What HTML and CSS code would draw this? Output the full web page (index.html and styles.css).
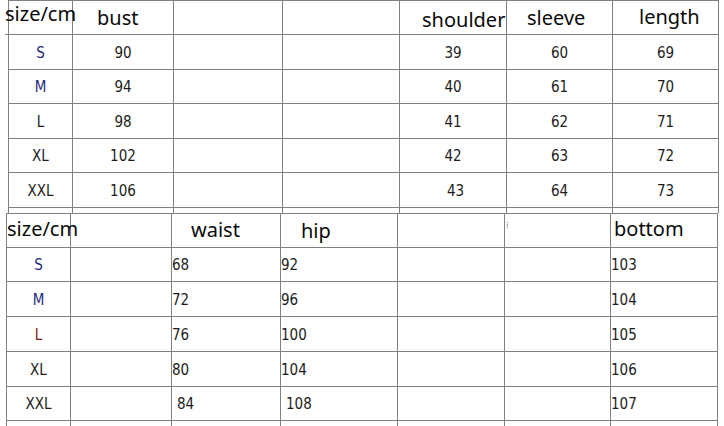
FILE: index.html
```html
<!DOCTYPE html>
<html>
<head>
<meta charset="utf-8">
<link rel="stylesheet" href="styles.css">
</head>
<body>
<div class="clip-top">
  <div class="grid grid-top">
    <div class="cell head h-size1">size/cm</div>
    <div class="cell head h-bust">bust</div>
    <div class="cell"></div>
    <div class="cell"></div>
    <div class="cell head h-shoulder">shoulder</div>
    <div class="cell head h-sleeve">sleeve</div>
    <div class="cell head h-length">length</div>

    <div class="cell data sz navy">S</div>
    <div class="cell data">90</div>
    <div class="cell"></div>
    <div class="cell"></div>
    <div class="cell data">39</div>
    <div class="cell data">60</div>
    <div class="cell data">69</div>

    <div class="cell data sz navy">M</div>
    <div class="cell data">94</div>
    <div class="cell"></div>
    <div class="cell"></div>
    <div class="cell data">40</div>
    <div class="cell data">61</div>
    <div class="cell data">70</div>

    <div class="cell data sz">L</div>
    <div class="cell data">98</div>
    <div class="cell"></div>
    <div class="cell"></div>
    <div class="cell data">41</div>
    <div class="cell data">62</div>
    <div class="cell data">71</div>

    <div class="cell data sz">XL</div>
    <div class="cell data">102</div>
    <div class="cell"></div>
    <div class="cell"></div>
    <div class="cell data">42</div>
    <div class="cell data">63</div>
    <div class="cell data">72</div>

    <div class="cell data sz">XXL</div>
    <div class="cell data">106</div>
    <div class="cell"></div>
    <div class="cell"></div>
    <div class="cell data shift">43</div>
    <div class="cell data">64</div>
    <div class="cell data">73</div>

    <div class="cell"></div>
    <div class="cell"></div>
    <div class="cell"></div>
    <div class="cell"></div>
    <div class="cell"></div>
    <div class="cell"></div>
    <div class="cell"></div>
  </div>
</div>

<div class="grid grid-bottom">
  <div class="cell head h-size2">size/cm</div>
  <div class="cell"></div>
  <div class="cell head h-waist">waist</div>
  <div class="cell head h-hip">hip</div>
  <div class="cell"></div>
  <div class="cell mark-cell"><span class="mark">⁞</span></div>
  <div class="cell head h-bottom">bottom</div>

  <div class="cell data sz navy">S</div>
  <div class="cell"></div>
  <div class="cell data left">68</div>
  <div class="cell data left">92</div>
  <div class="cell"></div>
  <div class="cell"></div>
  <div class="cell data left">103</div>

  <div class="cell data sz navy">M</div>
  <div class="cell"></div>
  <div class="cell data left">72</div>
  <div class="cell data left">96</div>
  <div class="cell"></div>
  <div class="cell"></div>
  <div class="cell data left">104</div>

  <div class="cell data sz red">L</div>
  <div class="cell"></div>
  <div class="cell data left">76</div>
  <div class="cell data left">100</div>
  <div class="cell"></div>
  <div class="cell"></div>
  <div class="cell data left">105</div>

  <div class="cell data sz">XL</div>
  <div class="cell"></div>
  <div class="cell data left">80</div>
  <div class="cell data left">104</div>
  <div class="cell"></div>
  <div class="cell"></div>
  <div class="cell data left">106</div>

  <div class="cell data sz">XXL</div>
  <div class="cell"></div>
  <div class="cell data left indent">84</div>
  <div class="cell data left indent">108</div>
  <div class="cell"></div>
  <div class="cell"></div>
  <div class="cell data left">107</div>

  <div class="cell"></div>
  <div class="cell"></div>
  <div class="cell"></div>
  <div class="cell"></div>
  <div class="cell"></div>
  <div class="cell"></div>
  <div class="cell"></div>
</div>
</body>
</html>
```

FILE: styles.css
```css
html, body {
  margin: 0;
  padding: 0;
  background: #ffffff;
  width: 724px;
  height: 426px;
  overflow: hidden;
}

.clip-top {
  padding-left: 8px;
  height: 213px;
  overflow: hidden;
}

.grid {
  display: grid;
  border-left: 1px solid #808080;
  border-top: 1px solid #808080;
  width: max-content;
}

.grid-top {
  grid-template-columns: 64px 101px 109px 117px 107px 106px 106px;
  grid-template-rows: 34px 35px 34px 35px 34px 35px 35px;
}

.grid-bottom {
  margin-left: 6px;
  grid-template-columns: 64px 101px 109px 117px 107px 106px 107px;
  grid-template-rows: 34px 34px 35px 35px 35px 34px 35px;
}

.cell {
  border-right: 1px solid #808080;
  border-bottom: 1px solid #808080;
  box-sizing: border-box;
  position: relative;
  min-width: 0;
}

.head {
  font-family: "Noto Sans", "Open Sans", sans-serif;
  font-size: 20px;
  line-height: 20px;
  color: #0a0a0a;
  white-space: nowrap;
  overflow: visible;
  z-index: 1;
}

.h-size1 { padding-top: 3px; margin-left: -4px; }
.h-bust { padding-top: 7px; padding-left: 24px; }
.h-shoulder { padding-top: 9px; padding-left: 22px; }
.h-sleeve { padding-top: 7px; padding-left: 20px; }
.h-length { padding-top: 6px; padding-left: 26px; }

.h-size2 { padding-top: 5px; padding-left: 0; }
.h-waist { padding-top: 6px; padding-left: 19px; }
.h-hip { padding-top: 7px; padding-left: 20px; }
.h-bottom { padding-top: 5px; padding-left: 3px; }

.data {
  font-family: "DejaVu Sans", "Liberation Sans", sans-serif;
  font-stretch: condensed;
  font-size: 15px;
  color: #1c1c1c;
  display: flex;
  align-items: center;
  justify-content: center;
  padding-top: 1px;
}

.data.left {
  justify-content: flex-start;
  padding-left: 0;
}

.indent { padding-left: 5px !important; }
.shift { padding-left: 5px; }

.navy { color: #1e2a78; }
.red { color: #7a1a0c; }

.mark-cell {
  font-family: "DejaVu Sans", sans-serif;
}

.mark {
  position: absolute;
  left: 1px;
  top: 8px;
  font-size: 8px;
  color: #777777;
  line-height: 8px;
}
```
